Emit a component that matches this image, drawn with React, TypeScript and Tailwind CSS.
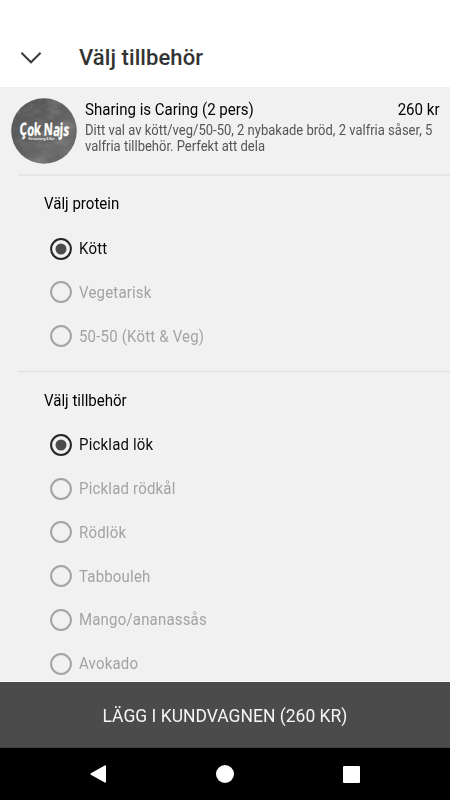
import React, { useState } from 'react';

type OptionGroup = {
  title: string;
  divider: string;
  options: string[];
};

const groups: OptionGroup[] = [
  {
    title: 'Välj protein',
    divider: 'border-t-2 border-[#e7e7e7]',
    options: ['Kött', 'Vegetarisk', '50-50 (Kött & Veg)'],
  },
  {
    title: 'Välj tillbehör',
    divider: 'border-b border-[#dedede]',
    options: ['Picklad lök', 'Picklad rödkål', 'Rödlök', 'Tabbouleh', 'Mango/ananassås', 'Avokado'],
  },
];

const Logo: React.FC = () => (
  <svg viewBox="0 0 66 66" className="h-[66px] w-[66px] shrink-0">
    <defs>
      <linearGradient id="stone" x1="0" y1="0" x2="1" y2="1">
        <stop offset="0" stopColor="#565656" />
        <stop offset="0.45" stopColor="#5e5e5e" />
        <stop offset="0.7" stopColor="#6c6c6c" />
        <stop offset="1" stopColor="#5c5c5c" />
      </linearGradient>
      <filter id="grain" x="0" y="0" width="1" height="1">
        <feTurbulence type="fractalNoise" baseFrequency="0.08 0.12" numOctaves="3" seed="4" />
        <feColorMatrix values="0 0 0 0 1  0 0 0 0 1  0 0 0 0 1  0.9 0 0 0 -0.35" />
      </filter>
      <clipPath id="round">
        <circle cx="33" cy="33" r="32.8" />
      </clipPath>
    </defs>
    <g clipPath="url(#round)">
      <rect width="66" height="66" fill="url(#stone)" />
      <rect width="66" height="66" filter="url(#grain)" opacity="0.3" />
    </g>
    <g fill="#fff" fontFamily='"Open Sans", "Liberation Sans", sans-serif'>
      <text
        transform="translate(8.5 37.6) skewX(-4)"
        fontSize="17"
        fontWeight="700"
        textLength="49"
        lengthAdjust="spacingAndGlyphs"
        rotate="-5 4 -4 0 -3 5 -3 4"
        stroke="#fff"
        strokeWidth="0.4"
      >
        Çok Najs
      </text>
      <text x="17.5" y="42.4" fontSize="4.2" fontWeight="600" textLength="26" lengthAdjust="spacingAndGlyphs">Restaurang &amp; Bar</text>
    </g>
  </svg>
);

type RadioRowProps = {
  label: string;
  checked: boolean;
  onSelect: () => void;
};

const RadioRow: React.FC<RadioRowProps> = ({ label, checked, onSelect }) => (
  <button
    role="radio"
    aria-checked={checked}
    onClick={onSelect}
    className={`flex h-[43.75px] w-full items-center pl-[50px] text-left text-base tracking-[0.2px] ${checked ? 'text-[#0c0c0c]' : 'text-[#a3a3a3]'}`}
  >
    <svg viewBox="0 0 22 22" className="mr-[7px] h-[22px] w-[22px] shrink-0">
      <circle cx="11" cy="11" r="9.9" fill="none" stroke={checked ? '#252525' : '#a3a3a3'} strokeWidth="2" />
      {checked && <circle cx="11" cy="11" r="5.5" fill="#4a4b4a" />}
    </svg>
    <span className="origin-left scale-x-[0.937] pt-px whitespace-nowrap">{label}</span>
  </button>
);

const App: React.FC = () => {
  const [selected, setSelected] = useState<number[]>([0, 0]);

  const select = (group: number, option: number) => {
    setSelected(selected.map((value, i) => (i === group ? option : value)));
  };

  return (
    <div className="flex h-[800px] w-[450px] flex-col overflow-hidden bg-[#f1f1f1] font-['Roboto',sans-serif] text-black">
      <header className="flex h-[87px] shrink-0 items-center bg-white pt-[28px] pl-5">
        <svg viewBox="0 0 22 14" className="h-[14px] w-[22px]" fill="none" stroke="#3b3b3b" strokeWidth="2">
          <path d="M1.4 1.7 11 11.3 20.6 1.7" />
        </svg>
        <h1 className="ml-[37px] text-[22px] font-medium tracking-[0.08px] text-[#333333]">Välj tillbehör</h1>
      </header>

      <main className="min-h-0 flex-1 overflow-hidden">
        <div className="flex h-[87px] pt-[11px] pr-[11px] pl-[11px]">
          <Logo />
          <div className="ml-2 min-w-0 flex-1">
            <div className="flex justify-between text-base leading-[23px]">
              <span className="origin-left scale-x-[0.94]">Sharing is Caring (2 pers)</span>
              <span className="origin-right scale-x-[0.94]">260 kr</span>
            </div>
            <p className="origin-left scale-x-[0.93] pt-[2px] text-[14px] leading-[15.5px] whitespace-nowrap text-[#555555]">
              Ditt val av kött/veg/50-50, 2 nybakade bröd, 2 valfria såser, 5
              <br />
              valfria tillbehör. Perfekt att dela
            </p>
          </div>
        </div>

        {groups.map((group, g) => (
          <section key={group.title} role="radiogroup" className="h-[196.25px]">
            <div className={`ml-[18px] h-[2px] ${group.divider}`} />
            <h2 className="flex h-[50.75px] items-center pt-[6px] pl-[44px] text-base">
              <span className="origin-left scale-x-[0.94]">{group.title}</span>
            </h2>
            {group.options.map((option, i) => (
              <RadioRow key={option} label={option} checked={selected[g] === i} onSelect={() => select(g, i)} />
            ))}
          </section>
        ))}
      </main>

      <button className="h-[67px] shrink-0 border-t border-b border-t-white border-b-[#3e3f3e] bg-[#4a4b4a] pt-px text-[18px] text-[#f5f5f5]">
        <span className="inline-block scale-x-[0.972]">LÄGG I KUNDVAGNEN (260 KR)</span>
      </button>

      <nav className="flex h-[52px] shrink-0 items-center justify-between bg-black pr-[90px] pl-[90px]">
        <svg viewBox="0 0 16 18" className="h-[18px] w-4" fill="#fff">
          <path d="M14.8.5Q16 0 16 1V17Q16 18 14.8 17.5L.8 9.8Q0 9 .8 8.2Z" />
        </svg>
        <span className="h-[18px] w-[18px] rounded-full bg-white" />
        <span className="h-[17px] w-[17px] rounded-[1px] bg-white" />
      </nav>
    </div>
  );
};

export default App;
